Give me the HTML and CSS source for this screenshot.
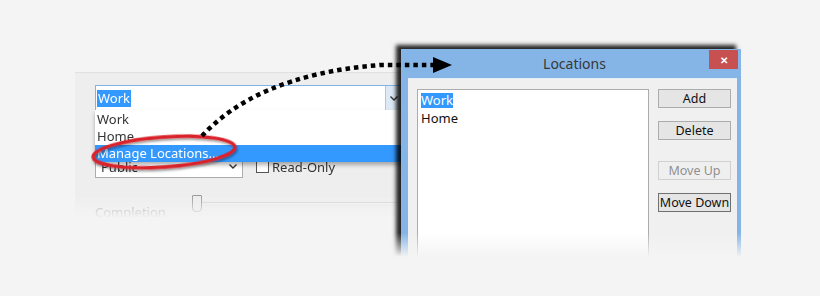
FILE: index.html
```html
<!DOCTYPE html>
<html lang="en">
<head>
    <meta charset="UTF-8">
    <meta name="viewport" content="width=device-width, initial-scale=1.0">
    <title>Manage Locations</title>
    <link rel="stylesheet" href="styles.css">
</head>
<body>
    <div class="stage">
        <!-- Task form behind the dialog -->
        <div class="panel">
            <div class="combo">
                <span class="combo-text"><span class="sel">Work</span></span>
                <span class="combo-btn">
                    <svg width="8" height="5" viewBox="0 0 8 5"><path d="M0.5 0.5 L4 4 L7.5 0.5" fill="none" stroke="#333" stroke-width="1.4"/></svg>
                </span>
            </div>

            <ul class="droplist">
                <li>Work</li>
                <li>Home</li>
                <li class="hot">Manage Locations...</li>
            </ul>

            <div class="row">
                <div class="select">
                    <span>Public</span>
                    <svg width="8" height="5" viewBox="0 0 8 5"><path d="M0.5 0.5 L4 4 L7.5 0.5" fill="none" stroke="#333" stroke-width="1.4"/></svg>
                </div>
                <label class="check"><span class="box"></span>Read-Only</label>
            </div>

            <div class="slider-row">
                <span class="slider-label">Completion</span>
                <div class="track"><span class="thumb"></span></div>
            </div>
        </div>

        <!-- Locations dialog -->
        <div class="dialog">
            <div class="titlebar">
                <span class="title">Locations</span>
                <span class="close">&#x2715;</span>
            </div>
            <div class="dlg-body">
                <ul class="listbox">
                    <li><span class="sel">Work</span></li>
                    <li>Home</li>
                </ul>
                <div class="buttons">
                    <button class="btn">Add</button>
                    <button class="btn btn-delete">Delete</button>
                    <button class="btn btn-up" disabled>Move Up</button>
                    <button class="btn btn-down">Move Down</button>
                </div>
            </div>
            <div class="fade"></div>
        </div>

        <!-- Callout: ring + dotted arrow -->
        <svg class="callout" width="820" height="296" viewBox="0 0 820 296">
            <defs>
                <filter id="soft" x="-20%" y="-50%" width="140%" height="200%">
                    <feDropShadow dx="1" dy="2" stdDeviation="1.3" flood-color="#000" flood-opacity="0.4"/>
                </filter>
            </defs>
            <ellipse cx="164" cy="152" rx="71" ry="15" transform="rotate(-4 164 152)"
                     fill="none" stroke="#d9232b" stroke-width="3.5" filter="url(#soft)"/>
            <path d="M202 136 C 235 100 290 72 380 65 L 434 65" fill="none"
                  stroke="#000" stroke-width="4.5" stroke-dasharray="4.5 4"/>
            <polygon points="433,57 452,65 433,73" fill="#000"/>
        </svg>
    </div>
</body>
</html>
```

FILE: styles.css
```css
body {
    margin: 0;
    background-color: #f4f4f4;
    font-family: "Noto Sans", "Open Sans", sans-serif;
    font-size: 12px;
    color: #333;
}

.stage {
    position: relative;
    width: 820px;
    height: 296px;
    overflow: hidden;
}

ul {
    list-style: none;
    margin: 0;
    padding: 0;
}

.sel {
    background-color: #3399ff;
    color: #fff;
}

/* ---------- form panel ---------- */

.panel {
    position: absolute;
    left: 75px;
    top: 72px;
    width: 345px;
    height: 146px;
    box-sizing: border-box;
    padding: 12px 0 0 20px;
    background-color: #eeeeee;
    border-top: 1px solid #e0e0e0;
    -webkit-mask-image: linear-gradient(to bottom, #000 124px, transparent 146px);
    mask-image: linear-gradient(to bottom, #000 124px, transparent 146px);
}

.combo {
    display: flex;
    width: 326px;
    height: 26px;
    box-sizing: border-box;
    border: 1px solid #7eb4ea;
    background-color: #fff;
}

.combo-text {
    flex: 1;
    display: flex;
    align-items: center;
    padding-left: 1px;
    font-size: 13px;
}

.combo-text .sel {
    line-height: 17px;
    padding: 0 1px;
}

.combo-btn {
    width: 30px;
    display: flex;
    align-items: center;
    padding-left: 4px;
    border-left: 1px solid #a9c8ea;
    background-color: #dde9f6;
}

.droplist {
    position: absolute;
    left: 20px;
    top: 37px;
    width: 326px;
    padding-top: 1px;
    background-color: #fff;
    box-shadow: 0 3px 4px rgba(0, 0, 0, 0.3);
    font-size: 13px;
    z-index: 2;
}

.droplist li {
    height: 17px;
    line-height: 17px;
    padding-left: 2px;
}

.droplist li.hot {
    background-color: #3399ff;
    color: #fff;
}

.row {
    display: flex;
    align-items: center;
    margin-top: 44px;
}

.select {
    display: flex;
    align-items: center;
    justify-content: space-between;
    width: 148px;
    height: 23px;
    box-sizing: border-box;
    padding: 0 5px 0 5px;
    border: 1px solid #acacac;
    background-color: #fff;
    font-size: 13px;
}

.check {
    display: flex;
    align-items: center;
    margin-left: 13px;
    font-size: 13px;
    color: #333;
}

.box {
    width: 11px;
    height: 11px;
    margin-right: 3px;
    border: 1px solid #555;
    background-color: #fff;
}

.slider-row {
    display: flex;
    align-items: flex-start;
    margin-top: 16px;
}

.slider-label {
    width: 97px;
    margin-top: 9px;
    font-size: 13px;
    color: #999;
}

.track {
    position: relative;
    flex: 1;
    height: 20px;
    margin-top: 1px;
}

.track::before {
    content: "";
    position: absolute;
    left: 0;
    right: 0;
    top: 7px;
    height: 2px;
    border-top: 1px solid #d4d4d4;
    border-bottom: 1px solid #e6e6e6;
}

.thumb {
    position: absolute;
    left: 0;
    top: 0;
    width: 8px;
    height: 15px;
    border: 1px solid #9a9a9a;
    border-radius: 1px 1px 4px 4px;
    background-color: #ececec;
}

/* ---------- dialog ---------- */

.dialog {
    position: absolute;
    left: 401px;
    top: 49px;
    width: 340px;
    height: 212px;
    box-sizing: border-box;
    padding: 0 4px 0 7px;
    display: flex;
    flex-direction: column;
    background-color: #85b5e6;
    box-shadow: -5px -4px 4px rgba(0, 0, 0, 0.85);
    z-index: 3;
}

.titlebar {
    position: relative;
    height: 29px;
    display: flex;
    align-items: center;
    justify-content: center;
    flex-shrink: 0;
}

.title {
    font-size: 14px;
    color: #383838;
    margin-left: 4px;
}

.close {
    position: absolute;
    right: -1px;
    top: 1px;
    width: 29px;
    height: 19px;
    display: flex;
    align-items: center;
    justify-content: center;
    background-color: #c75050;
    color: #fff;
    font-size: 10px;
    font-weight: bold;
}

.dlg-body {
    flex: 1;
    display: flex;
    padding: 10px 6px 0 9px;
    background-color: #f0f0f0;
    border-top: 1px solid #e4ecf5;
}

.listbox {
    width: 232px;
    box-sizing: border-box;
    padding: 1px 3px 0;
    border: 1px solid #acacac;
    border-bottom: none;
    background-color: #fff;
    font-size: 13px;
    color: #111;
}

.listbox li {
    height: 18px;
    line-height: 18px;
}

.listbox .sel {
    display: inline-block;
    line-height: 15px;
}

.buttons {
    display: flex;
    flex-direction: column;
    margin-left: 9px;
}

.btn {
    width: 73px;
    height: 19px;
    padding: 0;
    border: 1px solid #acacac;
    background-color: #e5e5e5;
    font-family: inherit;
    font-size: 12.5px;
    line-height: 16px;
    white-space: nowrap;
    color: #111;
}

.btn-delete {
    margin-top: 13px;
}

.btn-up {
    margin-top: 21px;
    border-color: #d0d0d0;
    background-color: #efefef;
    color: #8f8f8f;
}

.btn-down {
    margin-top: 13px;
    border-color: #707070;
}

.fade {
    position: absolute;
    left: -12px;
    right: -2px;
    bottom: -2px;
    height: 30px;
    background: linear-gradient(to bottom, rgba(244, 244, 244, 0), #f4f4f4 80%);
}

/* ---------- callout ---------- */

.callout {
    position: absolute;
    left: 0;
    top: 0;
    z-index: 4;
    pointer-events: none;
}
```
